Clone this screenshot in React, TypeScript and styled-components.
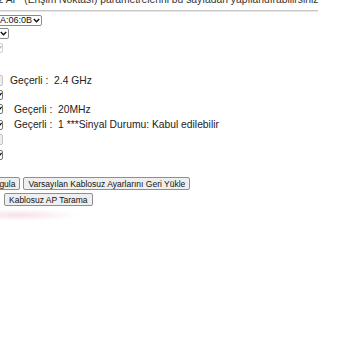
import styled, { createGlobalStyle } from 'styled-components'

const GlobalStyle = createGlobalStyle`
  html, body {
    margin: 0;
    padding: 0;
    background: #fff;
  }
  body {
    font-family: "Liberation Sans", Arial, sans-serif;
    color: #222;
  }
`

const Page = styled.div`
  width: 350px;
  height: 350px;
  overflow: hidden;
  position: relative;
  background:
    radial-gradient(ellipse 62px 6px at 18px 215px, rgba(236, 190, 202, 0.45), rgba(255, 255, 255, 0) 100%),
    #fff;
`

const Sheet = styled.div`
  margin: -6px 0 0 -10px;
  width: 340px;
`

const Intro = styled.div`
  font-size: 10.3px;
  line-height: 12px;
  color: #333;
  white-space: nowrap;
  margin-left: -29px;
`

const Rule = styled.div`
  margin: 4px 0 3px 10px;
  width: 318px;
  height: 1px;
  background: #c8c8c8;
  box-shadow: 0 1px 0 #e6e6e6;
`

const Form = styled.div`
  display: flex;
  flex-direction: column;
  font-size: 10.3px;
`

const Row = styled.div<{ $h: number }>`
  display: flex;
  align-items: center;
  height: ${p => p.$h}px;
`

const Select = styled.div<{ $w: number; $muted?: boolean }>`
  box-sizing: border-box;
  width: ${p => p.$w}px;
  height: 11px;
  border: 1px solid ${p => (p.$muted ? '#c4c4c4' : '#8a8a8a')};
  background: ${p => (p.$muted ? '#eee' : '#fff')};
  border-radius: 2px;
  display: flex;
  align-items: center;
  justify-content: flex-end;
  font-size: 9px;
  line-height: 9px;
  color: #111;
  padding-right: 1px;
  gap: 1px;
`

const Caret = () => (
  <svg width="7" height="5" viewBox="0 0 7 5">
    <path d="M0.8 1 L3.5 3.8 L6.2 1" fill="none" stroke="#111" strokeWidth="1.4" />
  </svg>
)

const Check = styled.div<{ $on?: boolean }>`
  box-sizing: border-box;
  width: 13px;
  height: 10px;
  border: 1px solid ${p => (p.$on ? '#777' : '#cfcfcf')};
  border-radius: 2px;
  background: #fff;
  display: flex;
  align-items: center;
  justify-content: flex-end;
  padding-right: 0;
`

const Tick = ({ faded }: { faded?: boolean }) => (
  <svg width="5" height="6" viewBox="0 0 5 6">
    <path d="M0 3.2 L1.6 4.8 L4.6 1" fill="none" stroke={faded ? '#bbb' : '#111'} strokeWidth="1.3" />
  </svg>
)

const Current = styled.span<{ $gap: number }>`
  margin-left: ${p => p.$gap}px;
  font-size: 10.3px;
  color: #222;
  white-space: pre;
`

const Actions = styled.div`
  display: flex;
  flex-direction: column;
  gap: 3px;
  margin-top: 15px;
`

const ActionRow = styled.div<{ $indent: number }>`
  display: flex;
  gap: 3px;
  margin-left: ${p => p.$indent}px;
`

const Button = styled.button`
  font-family: "Liberation Sans", Arial, sans-serif;
  font-size: 8.5px;
  line-height: 10px;
  height: 13px;
  padding: 0 4px;
  border: 1px solid #8f8f8f;
  border-radius: 2px;
  background: #efefef;
  color: #111;
  white-space: nowrap;
`

export default function App() {
  return (
    <Page>
      <GlobalStyle />
      <Sheet>
        <Intro>Kablosuz AP' (Erişim Noktası) parametrelerini bu sayfadan yapılandırabilirsiniz</Intro>
        <Rule />
        <Form>
          <Row $h={13}>
            <Select $w={52}>A:06:0B <Caret /></Select>
          </Row>
          <Row $h={13}>
            <Select $w={19}><Caret /></Select>
          </Row>
          <Row $h={15}>
            <Check><Tick faded /></Check>
          </Row>
          <Row $h={17} />
          <Row $h={16}>
            <Select $w={13} $muted />
            <Current $gap={7}>Geçerli :  2.4 GHz</Current>
          </Row>
          <Row $h={13}>
            <Check $on><Tick /></Check>
          </Row>
          <Row $h={16}>
            <Check $on><Tick /></Check>
            <Current $gap={11}>Geçerli :  20MHz</Current>
          </Row>
          <Row $h={15}>
            <Check $on><Tick /></Check>
            <Current $gap={11}>Geçerli :  1 ***Sinyal Durumu: Kabul edilebilir</Current>
          </Row>
          <Row $h={15}>
            <Select $w={13} $muted />
          </Row>
          <Row $h={15}>
            <Check $on><Tick /></Check>
          </Row>
        </Form>
        <Actions>
          <ActionRow $indent={-6}>
            <Button>Uygula</Button>
            <Button>Varsayılan Kablosuz Ayarlarını Geri Yükle</Button>
          </ActionRow>
          <ActionRow $indent={14}>
            <Button>Kablosuz AP Tarama</Button>
          </ActionRow>
        </Actions>
      </Sheet>
    </Page>
  )
}
